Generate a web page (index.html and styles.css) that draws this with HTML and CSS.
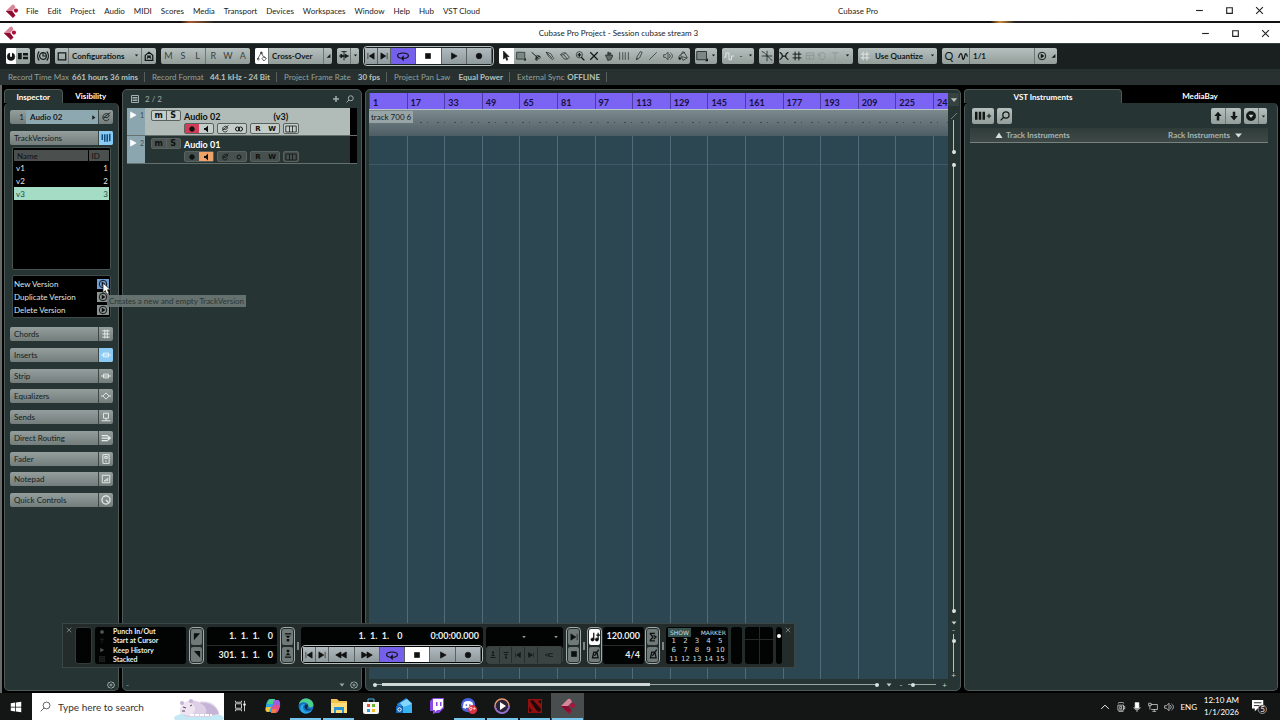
FILE: index.html
```
<!DOCTYPE html>
<html lang="en">
<head>
    <meta charset="utf-8">
    <title>Cubase Pro Project - Session cubase stream 3</title>
    <link rel="stylesheet" href="styles.css">
</head>
<body>
    <!-- Icon sprite -->
    <svg class="sprite" aria-hidden="true">
        <symbol id="logo" viewBox="0 0 16 16"><path d="M1 8 7 14l2 2 3-3-4-5z" fill="#9c1038"/><path d="M1 8 8 1q2-1 3 1l1 2-4 4z" fill="#d6869a"/><path d="M1 8h7l3 4-3 2z" fill="#8a0d30"/><circle cx="12.500" cy="7.500" r="2.400" fill="#b0123c"/></symbol>
        <symbol id="min" viewBox="0 0 16 16"><path d="M2 8h12"/></symbol>
        <symbol id="max" viewBox="0 0 16 16"><path d="M3 3h10v10H3z"/></symbol>
        <symbol id="close" viewBox="0 0 16 16"><path d="m2 2 12 12M14 2 2 14"/></symbol>
        <symbol id="power" viewBox="0 0 16 16"><circle cx="8" cy="9" r="6" fill="currentColor"/><path d="M8 1v8" stroke="#fff" stroke-width="3"/></symbol>
        <symbol id="zones" viewBox="0 0 16 16"><path d="M0 3h6v10H0zM8 3h8v4H8zM8 9h8v4H8z" fill="currentColor" stroke="none"/></symbol>
        <symbol id="knob" viewBox="0 0 16 16"><circle cx="8" cy="8" r="4.500" stroke-width="1.500"/><path d="M8 4v4h4M3 2C0 5 0 11 3 14M13 2c3 3 3 9 0 12" stroke-width="1.500"/></symbol>
        <symbol id="square" viewBox="0 0 16 16"><path d="M2 3h12v11H2z" stroke-width="2"/></symbol>
        <symbol id="range" viewBox="0 0 16 16"><path d="M1 2h13v11H1z" fill="#7d8785"/><path d="m12 15 4-4v4z" fill="currentColor" stroke="none"/></symbol>
        <symbol id="house" viewBox="0 0 16 16"><path d="M2 7 8 2l6 5v8H2zM5 8h6M5 12c1-3 5-3 6 0" stroke-width="2"/></symbol>
        <symbol id="auto" viewBox="0 0 16 16"><path d="m1 13 6-11 3 7 4 2M8 12l3-3 4 3-4 4z"/><circle cx="7" cy="3" r="1.500"/><circle cx="2" cy="13" r="1.500"/></symbol>
        <symbol id="snapx" viewBox="0 0 16 16"><path d="M0 8h16M4 1h8M8 1v14M3 5l4 3-4 3zM10 5l4 3-4 3z" fill="currentColor" stroke-width="1.500"/></symbol>
        <symbol id="prev" viewBox="0 0 16 16"><path d="M3 3v10M13 3v10L5 8z" fill="currentColor"/></symbol>
        <symbol id="next" viewBox="0 0 16 16"><path d="M13 3v10M3 3v10l8-5z" fill="currentColor"/></symbol>
        <symbol id="cycle" viewBox="0 0 16 16"><path d="M5 11c-6-1-6-7 3-7s9 6 3 7H8" stroke-width="1.500"/><path d="m9 7-4 4 4 4z" fill="currentColor" stroke="none"/></symbol>
        <symbol id="stop" viewBox="0 0 16 16"><path d="M4 4h8v8H4z" fill="currentColor"/></symbol>
        <symbol id="play" viewBox="0 0 16 16"><path d="M4 3v10l9-5z" fill="currentColor"/></symbol>
        <symbol id="rec" viewBox="0 0 16 16"><circle cx="8" cy="8" r="4.500" fill="currentColor"/></symbol>
        <symbol id="rew" viewBox="0 0 16 16"><path d="M8 4v8L1 8zM15 4v8L8 8z" fill="currentColor"/></symbol>
        <symbol id="ffw" viewBox="0 0 16 16"><path d="M1 4v8l7-4zM8 4v8l7-4z" fill="currentColor"/></symbol>
        <symbol id="pointer" viewBox="0 0 16 16"><path d="M4 0v13l3-3 2 5 2-1-2-5h4z" fill="currentColor"/></symbol>
        <symbol id="cut" viewBox="0 0 16 16"><path d="m1 2 10 9M9 7l5 2M8 9l1 5" stroke-width="1.500"/><circle cx="13" cy="10" r="2"/><circle cx="9" cy="13" r="2"/></symbol>
        <symbol id="glue" viewBox="0 0 16 16"><path d="m2 2 3 6 7 6 2-2-5-8zM2 2l9 9"/></symbol>
        <symbol id="erase" viewBox="0 0 16 16"><path d="M1 6 4 3h5l6 7-3 3H7zM1 6h5l6 7M6 6l3-3"/></symbol>
        <symbol id="zoom" viewBox="0 0 16 16"><circle cx="7" cy="6" r="5"/><path d="m10 10 5 5M4 6h6M7 3v6" stroke-width="2"/></symbol>
        <symbol id="mute" viewBox="0 0 16 16"><path d="m2 2 12 12M14 2 2 14" stroke-width="2"/></symbol>
        <symbol id="hand" viewBox="0 0 16 16"><path d="M4 10 2 7l2-1 2 2V2h2v5l1-4h2v5l2-2 1 2-3 6-5 1z" fill="#5f6967"/></symbol>
        <symbol id="warp" viewBox="0 0 16 16"><path d="M1 2v12M6 2v12M10 2v12M15 2v12"/></symbol>
        <symbol id="draw" viewBox="0 0 16 16"><path d="m4 14 1-5 5-8 3 1-4 9zM4 14l1-3"/></symbol>
        <symbol id="line" viewBox="0 0 16 16"><path d="M2 14 14 2"/></symbol>
        <symbol id="speaker" viewBox="0 0 16 16"><path d="M1 6h3l4-4v12l-4-4H1zM10 5c2 2 2 4 0 6M12 3c4 3 4 7 0 10"/></symbol>
        <symbol id="bucket" viewBox="0 0 16 16"><path d="m4 6 6-4 5 9-7 4zM4 6c-3 2-3 4-2 7M6 5C6 0 10 0 10 4M6 9l8 2"/><circle cx="3" cy="12" r="1.500" fill="currentColor"/></symbol>
        <symbol id="wave" viewBox="0 0 16 16"><path d="M0 10h3V3h5v11h4V8h4" stroke="#e3e8e7" stroke-width="1.500"/></symbol>
        <symbol id="cross" viewBox="0 0 16 16"><path d="M1 2c5 1 8 8 14 12M8 1v14M1 8h14"/></symbol>
        <symbol id="snap" viewBox="0 0 16 16"><path d="M1 2c6 3 6 9 0 12M15 2C9 5 9 11 15 14M5 8h6" stroke-width="2"/></symbol>
        <symbol id="grid" viewBox="0 0 16 16"><path d="M5 1v14M11 1v14M1 5h14M1 11h14" stroke-width="1.500"/></symbol>
        <symbol id="event" viewBox="0 0 16 16"><path d="M2 3h12v10H2zM2 7h12M7 7v6"/></symbol>
        <symbol id="turn" viewBox="0 0 16 16"><path d="M3 8c0-7 10-7 10-1M3 3v5h4M13 8c0 7-10 7-10 2"/></symbol>
        <symbol id="tee" viewBox="0 0 16 16"><path d="M3 3h10M8 3v11"/></symbol>
        <symbol id="zig" viewBox="0 0 16 16"><path d="M1 11c3-10 5-8 6-1s3 2 4-3 3-3 4 2" stroke-width="2"/></symbol>
        <symbol id="down" viewBox="0 0 16 16"><path d="M3 5h10l-5 6z" fill="currentColor" stroke="none"/></symbol>
        <symbol id="up" viewBox="0 0 16 16"><path d="m1 14 7-11 7 11z" fill="currentColor" stroke="none"/></symbol>
        <symbol id="corner" viewBox="0 0 16 16"><path d="M2 15 14 3v12z" fill="currentColor" stroke="none"/></symbol>
        <symbol id="right" viewBox="0 0 16 16"><path d="M4 1v14l10-7z" fill="currentColor" stroke="none"/></symbol>
        <symbol id="edit" viewBox="0 0 16 16"><path d="M13 11c-3 5-10 3-10-2 0-8 10-8 10-3 0 3-6 3-9 3L15 1" stroke-width="1.500"/></symbol>
        <symbol id="versions" viewBox="0 0 16 16"><path d="M2 2v9M6 2v12M10 2v12M14 1v12" stroke-width="2.500"/></symbol>
        <symbol id="chords" viewBox="0 0 16 16"><path d="M2 3h12M2 8h12M2 13h12M6 1v14M10 1v14" stroke-width="1.500"/></symbol>
        <symbol id="inserts" viewBox="0 0 16 16"><path d="M0 8h16M4 5h8v6H4z" stroke-width="1.500"/></symbol>
        <symbol id="eq" viewBox="0 0 16 16"><path d="M0 8h3l5-5 5 5h3M3 8l5 5 5-5" stroke-width="1.500"/></symbol>
        <symbol id="sends" viewBox="0 0 16 16"><path d="M4 2h8v8H4zM1 14h14M8 10v4" stroke-width="1.500"/></symbol>
        <symbol id="routing" viewBox="0 0 16 16"><path d="M1 4h10M1 8h14M1 12h10M11 5l4 3-4 3" stroke-width="2"/></symbol>
        <symbol id="fader" viewBox="0 0 16 16"><path d="M3 1h10v14H3zM6 4h4v3H6zM8 10v3" stroke-width="1.500"/></symbol>
        <symbol id="note" viewBox="0 0 16 16"><path d="M2 2h12v12H2zM5 11l6-4v4z" stroke-width="1.500"/></symbol>
        <symbol id="qc" viewBox="0 0 16 16"><circle cx="8" cy="8" r="6.500" stroke-width="2"/><path d="m8 8 4 4" stroke-width="2"/></symbol>
        <symbol id="go" viewBox="0 0 16 16"><circle cx="8" cy="8" r="6" stroke-width="1.500"/><path d="M6 4v8l6-4z" fill="currentColor" stroke="none"/></symbol>
        <symbol id="list" viewBox="0 0 16 16"><path d="M1 1h14v14H1zM3 5h10M3 8h10M3 11h10"/></symbol>
        <symbol id="plus" viewBox="0 0 16 16"><path d="M2 8h12M8 2v12" stroke-width="3"/></symbol>
        <symbol id="search" viewBox="0 0 16 16"><circle cx="9.500" cy="6.500" r="5"/><path d="m6 10-5 5"/></symbol>
        <symbol id="monitor" viewBox="0 0 16 16"><path d="M4 6h3l5-5v14L7 10H4z" fill="currentColor" stroke="none"/></symbol>
        <symbol id="rings" viewBox="0 0 16 16"><circle cx="5" cy="8" r="4"/><circle cx="11" cy="8" r="4"/></symbol>
        <symbol id="ring" viewBox="0 0 16 16"><circle cx="8" cy="8" r="4"/></symbol>
        <symbol id="lanes" viewBox="0 0 16 16"><path d="M1 4h14v8H1zM6 4v8M10 4v8"/></symbol>
        <symbol id="gear" viewBox="0 0 16 16"><path d="m8 1 2 2h3l1 3 1 2-1 2-1 3h-3l-2 2-2-2H3l-1-3-1-2 1-2 1-3h3z"/><circle cx="8" cy="8" r="2"/></symbol>
        <symbol id="keys" viewBox="0 0 16 16"><path d="M2 1v13M8 1v13M14 1v13" stroke-width="4"/></symbol>
        <symbol id="aup" viewBox="0 0 16 16"><path d="m8 1 6 7h-4v7H6V8H2z" fill="currentColor" stroke="none"/></symbol>
        <symbol id="adown" viewBox="0 0 16 16"><path d="m8 15 6-7h-4V1H6v7H2z" fill="currentColor" stroke="none"/></symbol>
        <symbol id="menu" viewBox="0 0 16 16"><circle cx="8" cy="8" r="7.500" fill="currentColor"/><path d="M4 6h8l-4 5z" fill="#c5cfcc" stroke="none"/></symbol>
        <symbol id="locl" viewBox="0 0 16 16"><path d="M3 2h10L3 13z" fill="currentColor" stroke="none"/></symbol>
        <symbol id="locr" viewBox="0 0 16 16"><path d="M13 14V3L3 3z" fill="currentColor" stroke="none"/></symbol>
        <symbol id="pin" viewBox="0 0 16 16"><path d="M3 2h10v2H3zM4 6h8l-4 4zM6 11h4v4H6z" fill="currentColor" stroke="none"/></symbol>
        <symbol id="pout" viewBox="0 0 16 16"><path d="M3 14h10v-2H3zM4 10h8L8 6zM6 1h4v4H6z" fill="currentColor" stroke="none"/></symbol>
        <symbol id="met" viewBox="0 0 16 16"><path d="m4 14 2-9h5l2 9zM7 11l7-10" stroke-width="2"/></symbol>
        <symbol id="tempo" viewBox="0 0 16 16"><circle cx="4" cy="12" r="2.500" fill="currentColor"/><circle cx="11" cy="12" r="2.500" fill="currentColor"/><path d="M6 12V1M13 12V1M10 5h6" stroke-width="2"/></symbol>
        <symbol id="sigma" viewBox="0 0 16 16"><path d="M3 2h8M3 14h8M3 2l5 6-5 6M9 5l4 3-4 3" stroke-width="2"/></symbol>
        <symbol id="back" viewBox="0 0 16 16"><path d="M16 5H8v6h8M10 8H1M4 5 1 8l3 3" stroke-width="1.500"/></symbol>
        <symbol id="win" viewBox="0 0 16 16"><path d="m1 3 6-1v5.500H1zM8 2l7-1v6.500H8zM1 8.500h6V14l-6-1zM8 8.500h7V15l-7-1z" fill="#fff" stroke="none"/></symbol>
        <symbol id="task" viewBox="0 0 16 16"><path d="M2 1v2h8V1M2 5h8v6H2zM2 15v-2h8v2M14 1v3M14 7v8"/><path d="M13 5h2v2h-2z" fill="currentColor"/></symbol>
        <symbol id="copilot" viewBox="0 0 16 16"><path d="M5 1h5L7 14H3C-1 14 1 1 5 1z" fill="#2aa7e8"/><path d="M6 1h4L8 6H2c1-3 2-5 4-5z" fill="#45d38a"/><path d="M1 9h5l-2 5C0 14 0 12 1 9z" fill="#f5c33c"/><path d="M9 2h4c4 0 2 13-3 13H6z" fill="#9b5de0"/><path d="M8 7h7c-1 5-2 8-5 8H6z" fill="#e4508c"/><path d="m7 11h5l-2 4H6z" fill="#f37c3f"/></symbol>
        <symbol id="edge" viewBox="0 0 16 16"><circle cx="8" cy="8" r="7.500" fill="#1271c4"/><path d="M1 6c2-8 14-7 14.500 1 0 3-5 3-5 1 0-4-6-5-9.500-2z" fill="#4fd08a"/><path d="M5 9c0 5 5 6 9 3-2 4-8 5-11 1-2-4 0-7 4-7-1 1-2 2-2 3z" fill="#28a9e6"/><path d="M7 7c2-1 3 0 3 1l-1 2c1 2 4 2 5 1-3 3-9 0-7-4z" fill="#0d2840"/></symbol>
        <symbol id="folder" viewBox="0 0 16 16"><path d="M0 1h6l2 2h8v12H0z" fill="#f3c34d"/><path d="M0 5h16v10H0z" fill="#ffdd7a"/><path d="M3 9h10v6h-2v-3H5v3H3z" fill="#2695d8"/></symbol>
        <symbol id="store" viewBox="0 0 16 16"><path d="M5 4V1h6v3" fill="none" stroke="#4db7ea"/><path d="M0 4h16v10q0 2-2 2H2q-2 0-2-2z" fill="#f5f5f5"/><path d="M4 6h3v3H4z" fill="#e8532d"/><path d="M9 6h3v3H9z" fill="#6fb42c"/><path d="M4 11h3v3H4z" fill="#2b9ee0"/><path d="M9 11h3v3H9z" fill="#f5b829"/></symbol>
        <symbol id="mail" viewBox="0 0 16 16"><path d="M1 6 10 0l6 5v9H3z" fill="#1c87dc"/><path d="m4 5 7-4 5 5-8 4z" fill="#87d7fa"/><path d="m4 10 12-4v9H4z" fill="#39b4f2"/><path d="M0 8h7v7H0z" fill="#1266b8"/><circle cx="3.500" cy="11.500" r="1.700" fill="none" stroke="#fff"/></symbol>
        <symbol id="twitch" viewBox="0 0 16 16"><path d="M1 3 4 0h11v10l-5 5H7l-3 1v-3H1z" fill="#8c45e8"/><path d="M4 1h10v8l-3 3H8l-2 2v-2H4z" fill="#fff"/><path d="M7 4h1.500v4H7zM11 4h1.500v4H11z" fill="#8c45e8"/></symbol>
        <symbol id="discord" viewBox="0 0 18 18"><circle cx="8" cy="8" r="8" fill="#4a63df"/><path d="M3 5q5-3 10 0l1 6-3 1-1-1H6l-1 1-3-1z" fill="#fff"/><circle cx="6" cy="8" r="1" fill="#4a63df"/><circle cx="10" cy="8" r="1" fill="#4a63df"/><circle cx="13" cy="13" r="5" fill="#df3345"/><text x="9" y="15" font-size="7" fill="#fff">9+</text></symbol>
        <symbol id="media" viewBox="0 0 16 16"><circle cx="8" cy="8" r="7" fill="#2a2438" stroke="#e89a74" stroke-width="1.500"/><path d="M1 8a7 7 0 0 0 14 0" fill="none" stroke="#8a6be0" stroke-width="1.500"/><path d="M6 4v8l6-4z" fill="#fff"/></symbol>
        <symbol id="dota" viewBox="0 0 16 16"><path d="M1 1h14v14H1z" fill="#8e1010"/><path d="m3 3 3-1 8 9-1 3-3-1zM11 3l3-1v4zM2 9l3 4-3 1z" fill="#240606"/></symbol>
        <symbol id="tusb" viewBox="0 0 16 16"><path d="M3 2c3-2 7-2 10 0M3 5h9v8H3zM12 7h2v4h-2M6 7h3v4H6zM4 15h8"/></symbol>
        <symbol id="mic" viewBox="0 0 16 16"><path d="M5 1h6v9H5z" fill="#fff"/><path d="M3 8c0 6 10 6 10 0M8 12v4"/></symbol>
        <symbol id="net" viewBox="0 0 16 16"><path d="M5 4h10v8H5M10 12v3M7 15h6M1 2h4v4H1zM3 6v6"/></symbol>
        <symbol id="chev" viewBox="0 0 16 16"><path d="m2 11 6-6 6 6" stroke-width="1.500"/></symbol>
    </svg>

    <header class="menubar">
        <svg class="logo"><use href="#logo"/></svg>
        <nav class="menu">
            <a href="#">File</a><a href="#">Edit</a><a href="#">Project</a><a href="#">Audio</a><a href="#">MIDI</a><a href="#">Scores</a><a href="#">Media</a><a href="#">Transport</a><a href="#">Devices</a><a href="#">Workspaces</a><a href="#">Window</a><a href="#">Help</a><a href="#">Hub</a><a href="#">VST Cloud</a>
        </nav>
        <span class="app-name">Cubase Pro</span>
        <div class="winbtns">
            <button aria-label="Minimize"><svg><use href="#min"/></svg></button>
            <button aria-label="Maximize"><svg><use href="#max"/></svg></button>
            <button aria-label="Close"><svg><use href="#close"/></svg></button>
        </div>
    </header>
    <div class="desktop-strip"></div>

    <div class="titlebar">
        <svg class="logo"><use href="#logo"/></svg>
        <h1>Cubase Pro Project - Session cubase stream 3</h1>
        <div class="winbtns">
            <button aria-label="Minimize"><svg><use href="#min"/></svg></button>
            <button aria-label="Maximize"><svg><use href="#max"/></svg></button>
            <button aria-label="Close"><svg><use href="#close"/></svg></button>
        </div>
    </div>

    <div class="toolbar">
        <div class="group">
            <button class="on narrow" aria-label="Activate project"><svg><use href="#power"/></svg></button>
            <button aria-label="Window layout"><svg><use href="#zones"/></svg></button>
        </div>
        <div class="group"><button class="wide" aria-label="Delay compensation"><svg class="big"><use href="#knob"/></svg></button></div>
        <div class="group configs">
            <button aria-label="Configuration"><svg><use href="#square"/></svg></button>
            <button class="text">Configurations <svg class="tiny"><use href="#down"/></svg></button>
            <button aria-label="Home"><svg><use href="#house"/></svg></button>
        </div>
        <div class="group states">
            <button>M</button><button>S</button><button class="end">L</button><button>R</button><button>W</button><button>A</button>
        </div>
        <div class="group crossover">
            <button class="on" aria-label="Automation"><svg><use href="#auto"/></svg></button>
            <button class="text">Cross-Over</button>
            <button class="slim" aria-label="More"><svg class="tiny"><use href="#corner"/></svg></button>
        </div>
        <div class="group autoscroll">
            <button aria-label="Auto-scroll"><svg><use href="#snapx"/></svg></button>
            <button class="slim" aria-label="More"><svg class="tiny"><use href="#down"/></svg></button>
        </div>
        <div class="transport">
            <button class="half" aria-label="Previous"><svg><use href="#prev"/></svg></button>
            <button class="half" aria-label="Next"><svg><use href="#next"/></svg></button>
            <button class="cycle" aria-label="Cycle"><svg class="big"><use href="#cycle"/></svg></button>
            <button class="on" aria-label="Stop"><svg><use href="#stop"/></svg></button>
            <button aria-label="Play"><svg><use href="#play"/></svg></button>
            <button aria-label="Record"><svg><use href="#rec"/></svg></button>
        </div>
        <div class="group tools">
            <button class="on" aria-label="Select"><svg><use href="#pointer"/></svg></button>
            <button aria-label="Range"><svg><use href="#range"/></svg></button>
            <button aria-label="Split"><svg><use href="#cut"/></svg></button>
            <button aria-label="Glue"><svg><use href="#glue"/></svg></button>
            <button aria-label="Erase"><svg><use href="#erase"/></svg></button>
            <button aria-label="Zoom"><svg><use href="#zoom"/></svg></button>
            <button aria-label="Mute"><svg><use href="#mute"/></svg></button>
            <button aria-label="Comp"><svg><use href="#hand"/></svg></button>
            <button aria-label="Warp"><svg><use href="#warp"/></svg></button>
            <button aria-label="Draw"><svg><use href="#draw"/></svg></button>
            <button aria-label="Line"><svg><use href="#line"/></svg></button>
            <button aria-label="Play tool"><svg><use href="#speaker"/></svg></button>
            <button aria-label="Color tool"><svg><use href="#bucket"/></svg></button>
        </div>
        <div class="group plain color">
            <button aria-label="Color"><svg class="big"><use href="#range"/></svg></button>
            <button class="slim" aria-label="Color menu"><svg class="tiny"><use href="#down"/></svg></button>
        </div>
        <div class="group plain nudge">
            <button aria-label="Nudge"><svg><use href="#wave"/></svg></button>
            <button class="slim">-</button>
            <button class="slim" aria-label="Nudge menu"><svg class="tiny"><use href="#down"/></svg></button>
        </div>
        <div class="group"><button class="wide" aria-label="Snap to zero crossing"><svg class="big"><use href="#cross"/></svg></button></div>
        <div class="group plain snap">
            <button aria-label="Snap"><svg><use href="#snap"/></svg></button>
            <button aria-label="Grid"><svg><use href="#grid"/></svg></button>
            <button class="dim" aria-label="Events"><svg><use href="#event"/></svg></button>
            <button class="dim" aria-label="Shuffle"><svg><use href="#turn"/></svg></button>
            <button class="dim" aria-label="Cursor"><svg><use href="#tee"/></svg></button>
            <button class="slim" aria-label="Snap menu"><svg class="tiny"><use href="#down"/></svg></button>
        </div>
        <div class="group plain usequant">
            <button class="light" aria-label="Grid type"><svg><use href="#grid"/></svg></button>
            <button class="text">Use Quantize <svg class="tiny"><use href="#down"/></svg></button>
        </div>
        <div class="group quantize">
            <button class="q">Q</button>
            <button class="end" aria-label="Iterative quantize"><svg><use href="#zig"/></svg></button>
            <button class="text">1/1</button>
            <button class="q" aria-label="Open quantize panel"><svg><use href="#go"/></svg></button>
            <button class="slim" aria-label="More"><svg class="tiny"><use href="#corner"/></svg></button>
        </div>
    </div>

    <div class="infoline">
        <p><span>Record Time Max</span><b>661 hours 36 mins</b></p>
        <p><span>Record Format</span><b>44.1 kHz - 24 Bit</b></p>
        <p><span>Project Frame Rate</span><b>30 fps</b></p>
        <p><span>Project Pan Law</span><b>Equal Power</b></p>
        <p><span>External Sync</span><b>OFFLINE</b></p>
    </div>

    <main class="workspace">
        <section class="panel inspector">
            <div class="tabs">
                <button class="tab active">Inspector</button>
                <button class="tab">Visibility</button>
            </div>
            <div class="inspector-body">
                <div class="bar track-title">
                    <span class="num">1</span>
                    <button class="title">Audio 02 <svg class="tiny"><use href="#right"/></svg></button>
                    <button class="side" aria-label="Edit channel"><svg><use href="#edit"/></svg></button>
                </div>
                <div class="bar versions-bar"><button class="title">TrackVersions</button><button class="side lit" aria-label="Versions"><svg><use href="#versions"/></svg></button></div>
                <div class="version-box">
                    <table class="versions">
                        <thead><tr><th>Name</th><th class="id">ID</th></tr></thead>
                        <tbody>
                            <tr><td>v1</td><td class="id">1</td></tr>
                            <tr><td>v2</td><td class="id">2</td></tr>
                            <tr class="selected"><td>v3</td><td class="id">3</td></tr>
                        </tbody>
                    </table>
                </div>
                <div class="actions">
                    <button>New Version <svg class="hover"><use href="#go"/></svg></button>
                    <button>Duplicate Version <svg><use href="#go"/></svg></button>
                    <button>Delete Version <svg><use href="#go"/></svg></button>
                    <div class="tooltip" role="tooltip">Creates a new and empty TrackVersion</div>
                    <svg class="cursor" viewBox="0 0 16 16"><path d="M4 0v13l3-3 2 5 3-1-2-5h4z" fill="#fff" stroke="#222"/></svg>
                </div>
                <div class="sections">
                    <div class="bar"><button class="title">Chords</button><button class="side" aria-label="Chords"><svg><use href="#chords"/></svg></button></div>
                    <div class="bar"><button class="title">Inserts</button><button class="side lit" aria-label="Bypass inserts"><svg><use href="#inserts"/></svg></button></div>
                    <div class="bar"><button class="title">Strip</button><button class="side" aria-label="Bypass strip"><svg><use href="#inserts"/></svg></button></div>
                    <div class="bar"><button class="title">Equalizers</button><button class="side" aria-label="Bypass EQ"><svg><use href="#eq"/></svg></button></div>
                    <div class="bar"><button class="title">Sends</button><button class="side" aria-label="Bypass sends"><svg><use href="#sends"/></svg></button></div>
                    <div class="bar"><button class="title">Direct Routing</button><button class="side" aria-label="Routing"><svg><use href="#routing"/></svg></button></div>
                    <div class="bar"><button class="title">Fader</button><button class="side" aria-label="Fader"><svg><use href="#fader"/></svg></button></div>
                    <div class="bar"><button class="title">Notepad</button><button class="side" aria-label="Notepad"><svg><use href="#note"/></svg></button></div>
                    <div class="bar"><button class="title">Quick Controls</button><button class="side" aria-label="Quick Controls"><svg><use href="#qc"/></svg></button></div>
                </div>
                <footer class="panel-foot"><button aria-label="Inspector setup"><svg><use href="#gear"/></svg></button></footer>
            </div>
        </section>

        <section class="panel framed tracklist">
            <header class="track-head">
                <svg><use href="#list"/></svg><span>2 / 2</span>
                <button aria-label="Add track"><svg class="small"><use href="#plus"/></svg></button>
                <button aria-label="Find track"><svg><use href="#search"/></svg></button>
            </header>
            <article class="track selected">
                <div class="strip"><svg><use href="#play"/></svg><span>1</span></div>
                <div class="keys"><button>m</button><button>S</button></div>
                <div class="track-main">
                    <h2>Audio 02 <span>(v3)</span></h2>
                    <div class="track-btns">
                        <div><button class="armed" aria-label="Record enable"><svg><use href="#rec"/></svg></button><button aria-label="Monitor"><svg><use href="#monitor"/></svg></button></div>
                        <div><button aria-label="Edit"><svg><use href="#edit"/></svg></button><button aria-label="Stereo"><svg><use href="#rings"/></svg></button></div>
                        <div><button>R</button><button>W</button></div>
                        <div><button aria-label="Lanes"><svg class="big"><use href="#lanes"/></svg></button></div>
                    </div>
                </div>
                <div class="level"></div>
            </article>
            <article class="track">
                <div class="strip"><svg><use href="#play"/></svg><span>2</span></div>
                <div class="keys"><button>m</button><button>S</button></div>
                <div class="track-main">
                    <h2>Audio 01</h2>
                    <div class="track-btns">
                        <div><button aria-label="Record enable"><svg><use href="#rec"/></svg></button><button class="monitoring" aria-label="Monitor"><svg><use href="#monitor"/></svg></button></div>
                        <div><button aria-label="Edit"><svg><use href="#edit"/></svg></button><button aria-label="Mono"><svg><use href="#ring"/></svg></button></div>
                        <div><button>R</button><button>W</button></div>
                        <div><button aria-label="Lanes"><svg class="big"><use href="#lanes"/></svg></button></div>
                    </div>
                </div>
                <div class="level"></div>
            </article>
            <footer class="panel-foot"><span>-</span><button aria-label="Zoom menu"><svg><use href="#down"/></svg></button><button aria-label="Track setup"><svg><use href="#gear"/></svg></button></footer>
        </section>

        <section class="panel framed arrange">
            <div class="ruler columns">
                <span>1</span><span>17</span><span>33</span><span>49</span><span>65</span><span>81</span><span>97</span><span>113</span><span>129</span><span>145</span><span>161</span><span>177</span><span>193</span><span>209</span><span>225</span><span>24</span>
            </div>
            <button class="ruler-menu" aria-label="Ruler format"><svg><use href="#down"/></svg></button>
            <div class="canvas">
                <div class="clip"><span>track 700 6</span></div>
                <div class="gridlines columns">
                    <i></i><i></i><i></i><i></i><i></i><i></i><i></i><i></i><i></i><i></i><i></i><i></i><i></i><i></i><i></i><i></i>
                </div>
            </div>
            <div class="vscroll">
                <svg><use href="#line"/></svg>
                <div class="rail rail-short"></div>
                <div class="rail rail-long"></div>
                <svg><use href="#down"/></svg>
                <span>-</span>
                <div class="rail rail-zoom"></div>
                <span>+</span>
            </div>
            <div class="hscroll">
                <div class="hrail"><div class="thumb"></div></div>
                <svg><use href="#down"/></svg>
                <span>-</span>
                <div class="hzoom"></div>
                <span>+</span>
            </div>
        </section>

        <section class="panel rack">
            <div class="tabs">
                <button class="tab active">VST Instruments</button>
                <button class="tab">MediaBay</button>
            </div>
            <div class="rack-body">
                <div class="rack-tools">
                    <div class="group plain add"><button aria-label="Add instrument"><svg><use href="#keys"/></svg><svg class="small"><use href="#plus"/></svg></button></div>
                    <div class="group find"><button class="wide" aria-label="Find"><svg><use href="#search"/></svg></button></div>
                    <div class="group push"><button class="wide" aria-label="Up"><svg><use href="#aup"/></svg></button><button class="wide" aria-label="Down"><svg><use href="#adown"/></svg></button></div>
                    <div class="group"><button class="wide" aria-label="Settings"><svg><use href="#menu"/></svg></button><button class="slim" aria-label="More"><svg class="tiny"><use href="#down"/></svg></button></div>
                </div>
                <div class="rack-head">
                    <button><svg><use href="#up"/></svg>Track Instruments</button>
                    <button>Rack Instruments<svg class="big"><use href="#down"/></svg></button>
                </div>
            </div>
        </section>
    </main>

    <!-- Floating transport panel -->
    <section class="transport-panel">
        <button class="x" aria-label="Close"><svg><use href="#close"/></svg></button>
        <div class="lcd cpu"></div>
        <div class="lcd modes">
            <svg><use href="#rec"/></svg><span>Punch In/Out</span>
            <svg><use href="#tee"/></svg><span>Start at Cursor</span>
            <svg><use href="#play"/></svg><span>Keep History</span>
            <svg><use href="#list"/></svg><span>Stacked</span>
        </div>
        <div class="pair"><button aria-label="Left locator"><svg><use href="#locl"/></svg></button><button aria-label="Right locator"><svg><use href="#locr"/></svg></button></div>
        <div class="lcd locators"><p><span>1.&nbsp; 1.&nbsp; 1.</span><span>0</span></p><p><span>301.&nbsp; 1.&nbsp; 1.</span><span>0</span></p></div>
        <div class="pair"><button aria-label="Punch in"><svg><use href="#pin"/></svg></button><button aria-label="Punch out"><svg><use href="#pout"/></svg></button></div>
        <i class="grip"></i>
        <div class="lcd main-time">
            <p><span>1.&nbsp; 1.&nbsp; 1.</span><span>0</span><span class="clock">0:00:00.000</span></p>
            <div class="transport">
                <button class="half" aria-label="Previous"><svg><use href="#prev"/></svg></button>
                <button class="half" aria-label="Next"><svg><use href="#next"/></svg></button>
                <button aria-label="Rewind"><svg class="big"><use href="#rew"/></svg></button>
                <button aria-label="Forward"><svg class="big"><use href="#ffw"/></svg></button>
                <button class="cycle" aria-label="Cycle"><svg class="big"><use href="#cycle"/></svg></button>
                <button class="on" aria-label="Stop"><svg><use href="#stop"/></svg></button>
                <button aria-label="Play"><svg><use href="#play"/></svg></button>
                <button aria-label="Record"><svg><use href="#rec"/></svg></button>
            </div>
        </div>
        <div class="lcd arranger">
            <p><svg><use href="#down"/></svg><svg><use href="#down"/></svg></p>
            <div class="arr-btns"><button aria-label="First"><svg><use href="#pout"/></svg></button><button aria-label="Last"><svg><use href="#pin"/></svg></button><button aria-label="Step back"><svg><use href="#prev"/></svg></button><button aria-label="Step on"><svg><use href="#next"/></svg></button><button class="return" aria-label="Return"><svg class="big"><use href="#back"/></svg></button></div>
        </div>
        <div class="pair"><button aria-label="Pre-roll"><svg><use href="#next"/></svg></button><button aria-label="Post-roll"><svg><use href="#stop"/></svg></button></div>
        <i class="grip"></i>
        <div class="pair"><button class="on" aria-label="Tempo track"><svg><use href="#tempo"/></svg></button><button aria-label="Click"><svg><use href="#met"/></svg></button></div>
        <div class="lcd tempo"><p><span>120.000</span></p><p><span>4/4</span></p></div>
        <div class="pair"><button aria-label="Sync"><svg><use href="#sigma"/></svg></button><button aria-label="Precount"><svg><use href="#met"/></svg></button></div>
        <i class="grip"></i>
        <div class="lcd markers">
            <div class="marker-head"><button class="show">SHOW</button><button>MARKER</button></div>
            <div class="marker-nums"><button>1</button><button>2</button><button>3</button><button>4</button><button>5</button><button>6</button><button>7</button><button>8</button><button>9</button><button>10</button><button>11</button><button>12</button><button>13</button><button>14</button><button>15</button></div>
        </div>
        <div class="lcd midi"></div>
        <div class="lcd out"></div>
        <div class="lcd vol"><i></i></div>
        <button class="x" aria-label="Close"><svg><use href="#close"/></svg></button>
    </section>

    <footer class="taskbar">
        <button class="start" aria-label="Start"><svg><use href="#win"/></svg></button>
        <label class="search">
            <svg><use href="#search"/></svg>
            <input type="text" placeholder="Type here to search" aria-label="Type here to search">
            <svg class="bear" viewBox="0 0 52 24">
                <ellipse cx="27" cy="22" rx="25" ry="6" fill="#c4e9f4"/>
                <path d="M8 16c0-6 4-10 9-11 4-2 7 0 10 1 11-2 19 4 20 12l-10 3H14z" fill="#ddd0e6"/>
                <path d="M28 7c9-1 17 4 19 11l-14 2c3-6 1-10-5-13z" fill="#c6b4d6"/>
                <path d="M8 15c0-5 3-9 7-9s9 4 8 8-5 6-9 5-6-1-6-4z" fill="#eee4f2"/>
                <circle cx="10" cy="7" r="2" fill="#c9b2d6"/><circle cx="19" cy="5" r="2" fill="#c9b2d6"/>
                <path d="m11 11 3 1M18 10l2-1M10 15h3" stroke="#54445f"/>
                <path d="M18 19h22" stroke="#fff" stroke-width="2" stroke-dasharray="4 1"/>
            </svg>
        </label>
        <div class="apps">
            <button aria-label="Task View"><svg class="tv"><use href="#task"/></svg></button>
            <button aria-label="Copilot"><svg><use href="#copilot"/></svg></button>
            <button class="open" aria-label="Edge"><svg><use href="#edge"/></svg></button>
            <button class="open" aria-label="File Explorer"><svg><use href="#folder"/></svg></button>
            <button aria-label="Store"><svg><use href="#store"/></svg></button>
            <button aria-label="Mail"><svg><use href="#mail"/></svg></button>
            <button aria-label="Twitch"><svg><use href="#twitch"/></svg></button>
            <button class="open" aria-label="Discord"><svg><use href="#discord"/></svg></button>
            <button class="open" aria-label="Media Player"><svg><use href="#media"/></svg></button>
            <button class="open" aria-label="Dota 2"><svg><use href="#dota"/></svg></button>
            <button class="open current" aria-label="Cubase"><svg><use href="#logo"/></svg></button>
        </div>
        <div class="tray">
            <svg><use href="#chev"/></svg><svg><use href="#tusb"/></svg><svg><use href="#mic"/></svg><svg><use href="#net"/></svg><svg><use href="#speaker"/></svg>
            <span>ENG</span>
        </div>
        <time>12:10 AM<br>1/1/2026</time>
        <button class="notify" aria-label="Notifications"><svg viewBox="0 0 16 16"><path d="M0 1h12v9H6l-3 3v-3H0z" fill="#fff"/><path d="M2 4h8M2 7h6" stroke="#222"/><circle cx="11" cy="11" r="4.500" fill="#222" stroke="#999"/><text x="9" y="14" font-size="8" fill="#fff">5</text></svg></button>
    </footer>
</body>
</html>
```
FILE: styles.css
```
* {
    box-sizing: border-box;
}
body {
    margin: 0;
    height: 100vh;
    display: flex;
    flex-direction: column;
    background-color: #000;
    color: #c3cdca;
    font-family: Lato, "Noto Sans", sans-serif;
    font-size: 8px;
    line-height: 10px;
    overflow: hidden;
    position: relative;
}
button {
    margin: 0;
    padding: 0;
    border: none;
    background: none;
    color: inherit;
    font: inherit;
    display: flex;
    align-items: center;
    justify-content: center;
}
p, h1, h2 {
    margin: 0;
    font-size: inherit;
    font-weight: inherit;
}
svg {
    width: 10px;
    height: 10px;
    flex: none;
    fill: none;
    stroke: currentColor;
}
svg.big {
    width: 12px;
    height: 12px;
}
svg.small {
    width: 6px;
    height: 6px;
}
svg.tiny {
    width: 5px;
    height: 5px;
}
.sprite {
    display: none;
}
.logo, .apps svg {
    stroke: none;
}

/* Window bars */
.menubar, .titlebar {
    flex: none;
    display: flex;
    align-items: center;
    background-color: #fff;
    color: #222;
}
.menubar {
    height: 21px;
    padding-left: 5px;
}
.logo {
    width: 14px;
    height: 14px;
}
.menu {
    display: flex;
    gap: 9px;
    padding-left: 7px;
}
.menu a {
    color: inherit;
    text-decoration: none;
}
.app-name, .titlebar h1 {
    flex: 1;
    text-align: center;
}
.app-name {
    padding-left: 52px;
}
.winbtns {
    display: flex;
    padding-right: 6px;
}
.winbtns button {
    width: 30px;
}
.winbtns svg {
    width: 9px;
    height: 9px;
    stroke-width: 2;
}
.desktop-strip {
    flex: none;
    height: 2px;
    background: linear-gradient(90deg, #111 180px, #a65a2a 190px, #222 215px, #111 990px, #d08a30 1000px, #222 1015px, #111);
}
.titlebar {
    height: 20px;
    padding-left: 3px;
}
.titlebar h1 {
    padding-left: 30px;
}
.titlebar .winbtns {
    padding-right: 0;
}

/* Toolbar */
.toolbar {
    flex: none;
    display: flex;
    align-items: center;
    gap: 5px;
    height: 26px;
    padding: 0 6px 2px;
    border-top: 1px solid #38403f;
    background-color: #1a1f1f;
}
.group {
    flex: none;
    display: flex;
    height: 16px;
    border-radius: 2px;
    background: linear-gradient(#b6c0be, #939e9b);
    color: #131817;
    overflow: hidden;
}
.group button {
    min-width: 14px;
    border-right: 1px solid #6d7876;
}
.group button:last-child, .plain button, .tools button, .states button {
    border-right: none;
}
.group .wide {
    min-width: 15px;
}
.group .narrow {
    min-width: 10px;
    border-right: none;
}
.group .slim {
    min-width: 8px;
}
.group .end {
    border-right: 1px solid #6d7876;
}
.group .text {
    flex: 1;
    justify-content: space-between;
    padding: 0 2px 0 3px;
    font-weight: bold;
}
.group .on, .transport .on, .pair .on {
    background: #fff;
}
.group .dim {
    color: #828d8b;
}
.group .light {
    color: #e3e8e7;
}
.configs {
    width: 101px;
}
.states {
    width: 89px;
}
.states button {
    flex: 1;
    font-size: 9px;
    color: #39413f;
}
.crossover {
    width: 77px;
}
.autoscroll {
    width: 22px;
    margin-right: -1px;
}
.tools {
    width: 191px;
}
.tools button {
    flex: 1;
}
.color {
    width: 22px;
}
.nudge {
    width: 32px;
    justify-content: space-between;
}
.snap {
    width: 74px;
    justify-content: space-between;
}
.group.snap button {
    min-width: 10px;
}
.usequant {
    width: 79px;
}
.quantize {
    width: 115px;
}
.quantize .q {
    font-size: 11px;
    border-right: none;
}
.transport {
    flex: none;
    display: flex;
    width: 131px;
    height: 20px;
    padding: 1px;
    border: 1px solid #b5bfbd;
    border-radius: 4px;
    color: #111;
}
.transport button {
    flex: 2;
    border-right: 1px solid #59625f;
    background: linear-gradient(#b0babf, #8f9a9d);
}
.transport .half {
    flex: 1;
}
.transport .cycle {
    background: #7460ea;
}

/* Info line */
.infoline {
    flex: none;
    display: grid;
    grid-template-columns: 144px 132px 110px 123px 97px;
    height: 16px;
    padding-left: 8px;
    align-items: center;
    background-color: #28312f;
    color: #94a09c;
    white-space: nowrap;
}
.infoline p {
    display: flex;
    justify-content: space-between;
    padding-right: 6px;
    margin-right: 7px;
    border-right: 1px solid #56615e;
}
.infoline b {
    color: #b4c0bc;
}

/* Panels */
.workspace {
    flex: 1;
    display: grid;
    grid-template-columns: 115px 240px 1fr 314px;
    gap: 3px;
    padding: 4px 2px 2px 2px;
    border-left: 2px solid #666b6a;
    min-height: 0;
}
.panel {
    display: flex;
    flex-direction: column;
    min-width: 0;
}
.framed, .inspector-body, .rack-body {
    border: 1px solid #4f5a58;
    border-radius: 5px;
    background-color: #263433;
}
.inspector-body, .rack-body {
    flex: 1;
    border-top: none;
    display: flex;
    flex-direction: column;
}
.tabs {
    display: flex;
    height: 14px;
}
.tab {
    flex: 1;
    color: #fff;
    font-weight: bold;
}
.tab.active {
    background-color: #263433;
    border: 1px solid #4f5a58;
    border-bottom: none;
    border-radius: 4px 4px 0 0;
}
.panel-foot {
    display: flex;
    align-items: center;
    gap: 4px;
    height: 11px;
    margin-top: auto;
    padding: 0 3px;
    color: #9ba6a3;
}
.panel-foot button:first-of-type {
    margin-left: auto;
}
.panel-foot svg {
    width: 8px;
    height: 8px;
    stroke-width: 2;
}

/* Inspector */
.inspector-body {
    padding: 7px 0 0 0;
}
.bar {
    display: flex;
    height: 14px;
    margin: 0 5px;
    border-radius: 2px;
    background: linear-gradient(#949e9c, #737e7c);
    color: #161c1b;
    overflow: hidden;
}
.bar .title {
    flex: 1;
    justify-content: space-between;
    padding: 0 2px 0 4px;
}
.bar .side {
    width: 15px;
    border-left: 1px solid #3d4846;
    color: #e6ecea;
}
.bar .side.lit {
    background-color: #8bcbf3;
    color: #e6f6ff;
}
.versions-bar {
    margin-top: 7px;
}
.versions-bar .side.lit {
    color: #0e4f80;
}
.track-title .num {
    width: 16px;
    padding: 2px 2px 0 0;
    text-align: right;
}
.track-title .title {
    background-color: #8ea8b2;
    font-weight: bold;
}
.track-title .side {
    color: #1d2423;
}
.version-box {
    height: 123px;
    margin: 2px 7px 0;
    padding: 2px 1px;
    border: 1px solid #48524f;
    border-radius: 2px;
    background-color: #000;
}
.versions {
    width: 100%;
    border-collapse: collapse;
    color: #e0e6e4;
}
.versions th, .versions td {
    height: 13px;
    padding: 0 2px;
    text-align: left;
    font-weight: normal;
}
.versions th {
    height: 11px;
    padding: 0 3px;
    background-color: #4b4f4e;
    color: #101010;
}
.versions th.id {
    width: 21px;
    border-left: 1px solid #000;
}
.versions td.id {
    padding: 0 1px 0 0;
    text-align: right;
}
.versions .selected {
    background-color: #a4dcc6;
    color: #23493c;
}
.actions {
    position: relative;
    margin: 5px 7px 0;
    padding: 1px;
    border: 1px solid #414b49;
    border-radius: 2px;
    background-color: #000;
    color: #dde4e2;
}
.actions button {
    width: 100%;
    height: 13px;
    justify-content: space-between;
}
.actions button svg {
    width: 12px;
    padding: 0 1px;
    background-color: #8a9492;
    color: #111;
}
.actions button svg.hover {
    background-color: #6f9fd6;
}
.tooltip {
    position: absolute;
    left: 94px;
    top: 19px;
    z-index: 3;
    padding: 1px 2px;
    background-color: #6c7876;
    color: #2c3735;
    white-space: nowrap;
    opacity: 0.9;
}
.cursor {
    position: absolute;
    left: 87px;
    top: 7px;
    z-index: 4;
    width: 12px;
    height: 12px;
}
.sections {
    display: grid;
    align-content: space-between;
    height: 180px;
    margin-top: 9px;
}

/* Track list */
.track-head {
    display: flex;
    align-items: center;
    gap: 6px;
    height: 18px;
    padding: 0 7px 0 8px;
    color: #a3afac;
}
.track-head button:first-of-type {
    margin-left: auto;
}
.track-head svg {
    width: 8px;
    height: 8px;
    stroke-width: 2;
}
.track {
    display: flex;
    height: 28px;
    margin: 0 4px;
    border-bottom: 1px solid #66716e;
    color: #fff;
}
.track.selected {
    background-color: #b1bbb7;
    color: #0b0f0e;
}
.strip {
    display: flex;
    justify-content: space-between;
    width: 18px;
    padding: 2px 1px 0 1px;
    background-color: #8ca6b0;
    color: #3d4c50;
    font-size: 7px;
}
.strip svg {
    color: #fff;
}
.keys {
    display: flex;
    width: 30px;
    height: 11px;
    margin: 2px 3px 0 6px;
    border: 1px solid #59625f;
    border-radius: 2px;
    background-color: #4d5654;
    color: #0d1110;
}
.selected .keys, .selected .track-btns div {
    background-color: #c4cdca;
}
.keys button {
    flex: 1;
    font-family: "DejaVu Sans", sans-serif;
    font-weight: bold;
}
.keys button + button {
    border-left: 1px solid #59625f;
}
.track-main {
    flex: 1;
    padding-top: 2px;
}
.track-main h2 {
    display: flex;
    font-size: 9px;
    line-height: 13px;
    font-weight: bold;
}
.track-main h2 span {
    margin-left: 53px;
}
.track-btns {
    display: flex;
    gap: 3px;
    color: #0d1110;
}
.track-btns div {
    display: flex;
    height: 11px;
    border: 1px solid #59625f;
    border-radius: 2px;
    background-color: #46504e;
}
.track-btns button {
    width: 14px;
    font-family: "DejaVu Sans", sans-serif;
    font-size: 7px;
    font-weight: bold;
}
.track-btns svg {
    width: 8px;
    height: 8px;
    stroke-width: 2;
}
.track-btns .big {
    width: 12px;
    height: 12px;
    stroke-width: 1;
}
.track-btns .armed {
    background-color: #d23c58;
}
.track-btns .monitoring {
    background-color: #efa268;
}
.level {
    width: 7px;
    background-color: #000;
}

/* Arrange */
.arrange {
    display: grid;
    grid-template-columns: 1fr 11px;
    grid-template-rows: 17px 1fr 11px;
    padding: 3px 1px 0 3px;
}
.columns {
    display: grid;
    grid-template-columns: repeat(15, 5fr) 2fr;
}
.ruler {
    background-color: #7b63f3;
    border-bottom: 1px solid #b9c6c8;
}
.ruler span {
    min-width: 0;
    overflow: hidden;
    padding: 5px 0 0 3px;
    border-left: 1px solid #4b3aa8;
    color: #171040;
    font-size: 9px;
    font-weight: bold;
}
.ruler-menu {
    height: 13px;
    background-color: #35423f;
    color: #b9c4c1;
}
.canvas {
    display: flex;
    flex-direction: column;
    background-color: #2c4652;
}
.clip {
    height: 26px;
    background: repeating-linear-gradient(90deg, #3c494f 0, #3c494f 2px, transparent 2px, transparent 7px, #3c494f 7px, #3c494f 8px, transparent 8px, transparent 17px) 0 12px / 100% 1px no-repeat, linear-gradient(#7c898c, #4e5e65);
}
.clip span {
    display: inline-block;
    margin-top: 1px;
    padding: 1px 2px;
    background-color: #98a4a6;
    color: #141a1c;
}
.gridlines {
    flex: 1;
    background: linear-gradient(#3d5a66, #3d5a66) 0 28px / 100% 1px no-repeat;
}
.gridlines i {
    border-left: 1px solid #4e6c79;
}
.gridlines i:first-child {
    border-left: none;
}
.vscroll {
    display: flex;
    flex-direction: column;
    align-items: center;
    padding-top: 2px;
    color: #c5d1ce;
}
.vscroll svg, .hscroll svg {
    width: 8px;
    height: 8px;
}
.vscroll span {
    line-height: 7px;
}
.rail {
    width: 1px;
    background-color: #b5c1be;
    display: flex;
    flex-direction: column;
    justify-content: space-between;
    align-items: center;
}
.rail::after, .rail-long::before, .hrail::before, .hrail::after, .hzoom::before {
    content: "";
    flex: none;
    width: 4px;
    height: 4px;
    border-radius: 2px;
    background-color: #d9e2df;
}
.rail-short {
    height: 34px;
    justify-content: flex-end;
    margin-bottom: 9px;
}
.rail-long {
    flex: 1;
    margin-bottom: 6px;
}
.rail-zoom {
    height: 38px;
    justify-content: flex-end;
}
.rail-zoom::after {
    margin-bottom: 29px;
}
.hscroll {
    grid-column: 1 / 3;
    display: flex;
    align-items: center;
    gap: 6px;
    padding: 0 12px 0 4px;
    color: #c5d1ce;
}
.hrail {
    flex: 1;
    display: flex;
    align-items: center;
    justify-content: space-between;
    background: linear-gradient(#9ba8a5, #9ba8a5) center / 100% 1px no-repeat;
}
.thumb {
    width: 53%;
    height: 3px;
    margin-left: 5px;
    margin-right: auto;
    background-color: #d0d8d5;
}
.hzoom {
    width: 28px;
    padding-left: 3px;
    background: linear-gradient(#9ba8a5, #9ba8a5) center / 100% 1px no-repeat;
}
.hzoom::before {
    display: block;
}

/* VST rack */
.rack-body {
    padding: 5px 9px 0 5px;
}
.rack-tools {
    display: flex;
    gap: 3px;
    padding: 0 1px 4px 2px;
}
.rack-tools .add {
    width: 22px;
}
.add button {
    flex: 1;
    gap: 1px;
}
.find svg {
    stroke-width: 2;
}
.rack-tools .push {
    margin-left: auto;
}
.rack-head {
    display: flex;
    justify-content: space-between;
    height: 15px;
    padding: 0 24px 0 25px;
    border-bottom: 1px solid #77827f;
    background: linear-gradient(#303c3a, #3f4a48);
    color: #a7b3af;
}
.rack-head button {
    gap: 3px;
    font-weight: bold;
}
.rack-head svg {
    width: 8px;
    height: 8px;
    color: #d5dfdc;
}
.rack-head svg.big {
    width: 11px;
    height: 11px;
}

/* Transport panel */
.transport-panel {
    position: absolute;
    left: 62px;
    bottom: 52px;
    display: flex;
    gap: 3px;
    height: 45px;
    padding: 3px;
    border: 1px solid #3c4644;
    background-color: #232c2b;
    color: #e8eeec;
}
.transport-panel .x {
    align-self: flex-start;
    width: 6px;
    color: #8b9693;
}
.transport-panel .x svg {
    width: 6px;
    height: 6px;
    stroke-width: 2;
}
.lcd {
    border-radius: 3px;
    background-color: #020303;
}
.cpu {
    width: 17px;
    border: 1px solid #333c3a;
}
.modes {
    display: grid;
    grid-template-columns: 14px 1fr;
    align-items: center;
    width: 91px;
    padding-left: 4px;
    line-height: 9px;
    font-size: 7px;
    font-weight: bold;
}
.modes svg {
    width: 6px;
    height: 6px;
    color: #4e5856;
}
.pair {
    display: grid;
    gap: 2px;
    width: 15px;
    padding: 1px;
    border: 1px solid #a0aaa8;
    border-radius: 4px;
}
.pair button {
    border-radius: 2px;
    background-color: #707a78;
    color: #0c100f;
}
.locators, .tempo {
    display: grid;
    font-size: 9px;
    font-weight: bold;
}
.locators {
    width: 70px;
}
.lcd p {
    display: flex;
    align-items: center;
    justify-content: flex-end;
    gap: 8px;
    padding-right: 4px;
}
.locators p + p, .tempo p + p {
    border-top: 1px solid #262c2b;
}
.grip {
    width: 2px;
    height: 8px;
    margin: 15px -1px 0;
    background-color: #7b8583;
}
.main-time {
    display: flex;
    flex-direction: column;
    width: 182px;
    font-size: 9px;
    font-weight: bold;
}
.main-time p {
    flex: 1;
}
.main-time .clock {
    margin-left: 20px;
}
.main-time .transport {
    width: 182px;
    height: 19px;
}
.arranger {
    display: flex;
    flex-direction: column;
    width: 77px;
}
.arranger p {
    flex: 1;
    gap: 26px;
    color: #8b9593;
}
.arranger p svg {
    width: 6px;
    height: 6px;
}
.arr-btns {
    display: flex;
    height: 18px;
    border: 1px solid #39413f;
    border-radius: 3px;
    background-color: #3b4442;
    color: #131716;
}
.arr-btns button {
    flex: 1;
    border-right: 1px solid #262d2b;
}
.arr-btns .return {
    flex: 2;
}
.arr-btns svg {
    width: 8px;
    height: 8px;
}
.tempo {
    width: 41px;
    margin: 0 -2px;
}
.markers {
    width: 62px;
    padding: 1px 2px;
    font-family: "DejaVu Sans", sans-serif;
    font-size: 6px;
    line-height: 9px;
    color: #d3dcda;
}
.marker-head {
    display: flex;
    justify-content: space-between;
}
.marker-head .show {
    padding: 0 2px;
    background-color: #35524f;
}
.marker-nums {
    display: grid;
    grid-template-columns: repeat(5, 1fr);
    font-size: 7px;
}
.midi {
    width: 11px;
}
.out {
    width: 28px;
    background: linear-gradient(#242a29, #242a29) center / 1px 100% no-repeat, linear-gradient(#242a29, #242a29) 0 12px / 100% 1px no-repeat, #020303;
}
.vol {
    width: 6px;
}
.vol i {
    display: block;
    width: 4px;
    height: 4px;
    margin: 7px auto 0;
    border-radius: 2px;
    background-color: #fff;
}

/* Taskbar */
.taskbar {
    flex: none;
    display: flex;
    align-items: stretch;
    height: 27px;
    background-color: #131615;
    color: #fff;
}
.start {
    width: 32px;
}
.start svg {
    width: 12px;
    height: 12px;
}
.search {
    display: flex;
    align-items: center;
    width: 192px;
    padding-left: 8px;
    background-color: #fff;
    color: #222;
}
.search svg {
    width: 11px;
    height: 11px;
}
.search input {
    flex: 1;
    min-width: 0;
    padding: 0 0 0 7px;
    border: none;
    outline: none;
    background: none;
    font-family: inherit;
    font-size: 10px;
}
.search input::placeholder {
    color: #333;
    opacity: 1;
}
.search .bear {
    width: 52px;
    height: 24px;
    stroke: none;
    align-self: flex-end;
}
.apps {
    display: grid;
    grid-template-columns: repeat(11, 1fr);
    width: 360px;
}
.apps button {
    border-bottom: 2px solid transparent;
}
.apps svg {
    width: 16px;
    height: 16px;
}
.apps svg.tv {
    width: 12px;
    height: 12px;
    stroke: currentColor;
}
.apps .open {
    border-image: linear-gradient(90deg, transparent 3px, #76c6ee 3px, #76c6ee 30px, transparent 30px) 2;
    border-style: solid;
    border-width: 0 0 2px 0;
}
.apps .current {
    background-color: #4a4d4d;
}
.tray {
    display: flex;
    align-items: center;
    gap: 6px;
    margin-left: auto;
}
time {
    width: 42px;
    text-align: right;
    line-height: 12px;
    padding-top: 1px;
}
.notify {
    width: 41px;
}
.notify svg {
    width: 15px;
    height: 15px;
    stroke: none;
}
```
